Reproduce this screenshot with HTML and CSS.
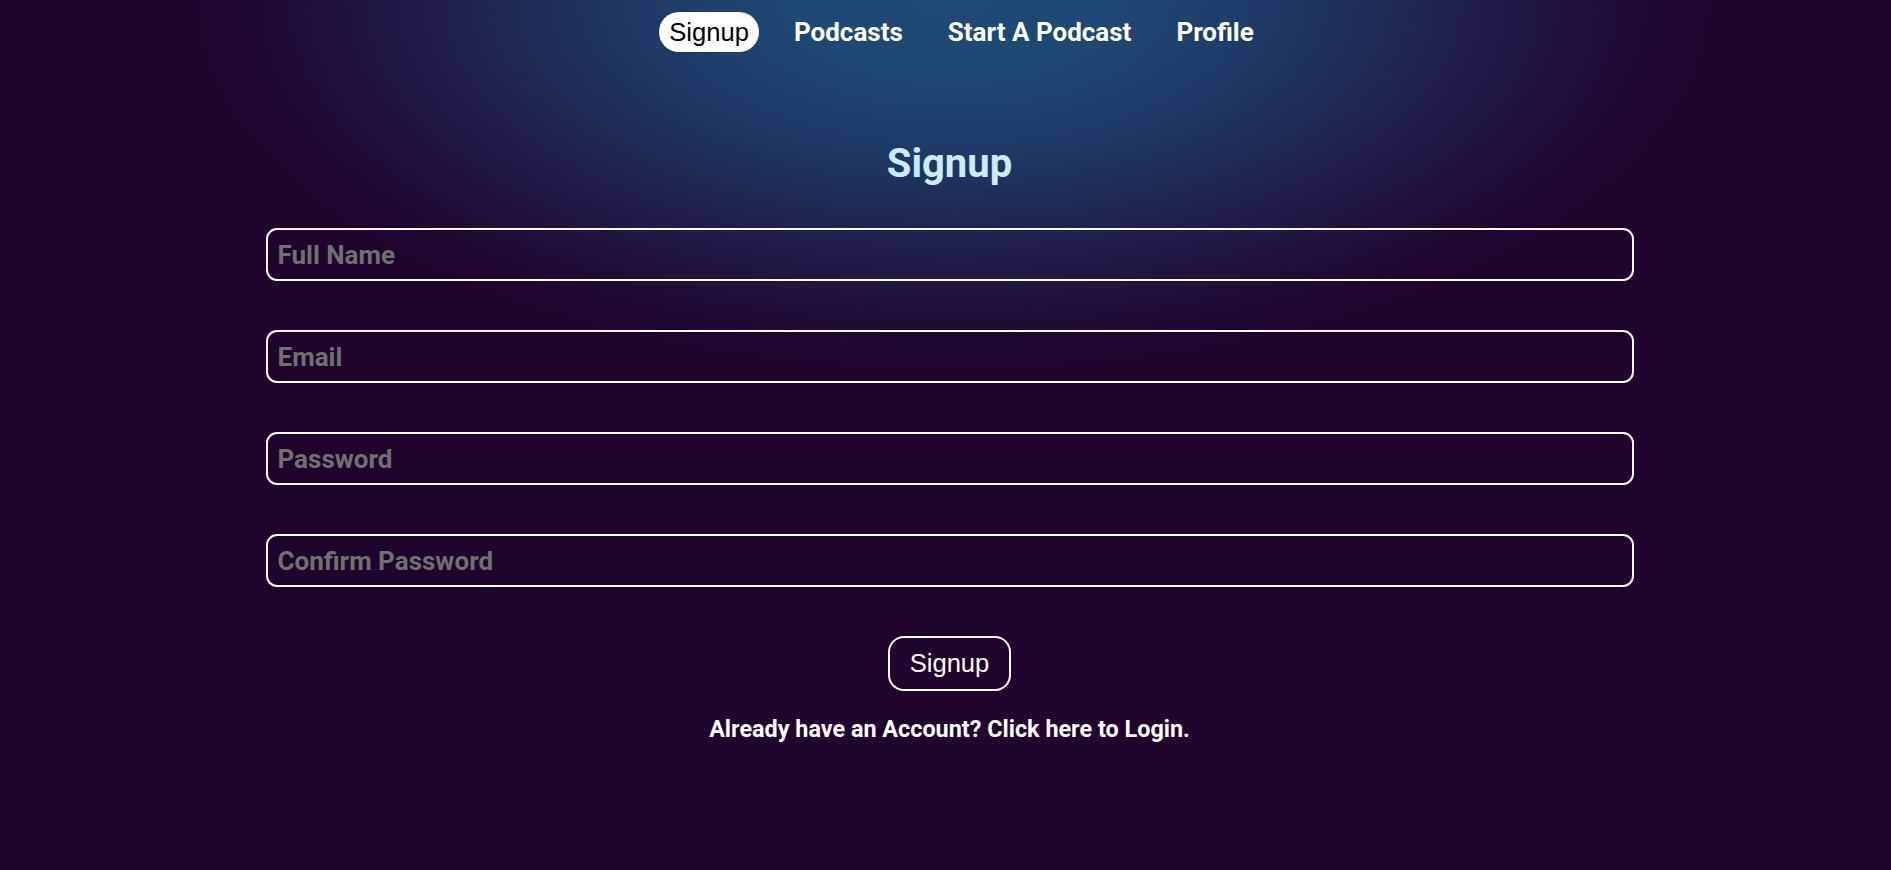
FILE: index.html
```html
<!DOCTYPE html>
<html lang="en">
<head>
<meta charset="utf-8">
<title>Signup</title>
<link rel="stylesheet" href="styles.css">
</head>
<body>
<div class="app">
  <nav class="nav">
    <a class="nav-link active" href="#">Signup</a>
    <a class="nav-link" href="#">Podcasts</a>
    <a class="nav-link" href="#">Start A Podcast</a>
    <a class="nav-link" href="#">Profile</a>
  </nav>
  <main class="page">
    <h1 class="title">Signup</h1>
    <form class="form">
      <input class="field" type="text" placeholder="Full Name">
      <input class="field" type="email" placeholder="Email">
      <input class="field" type="password" placeholder="Password">
      <input class="field" type="password" placeholder="Confirm Password">
      <button class="submit" type="button">Signup</button>
      <p class="switch">Already have an Account? Click here to Login.</p>
    </form>
  </main>
</div>
</body>
</html>
```

FILE: styles.css
```css
html, body {
  margin: 0;
  padding: 0;
  height: 100%;
}

body {
  background-color: #1f042e;
  background-image: radial-gradient(ellipse 760px 370px at 953px 0px, #1e4a76 0%, #1e4873 20%, #1e3b67 40%, #1f2954 58%, #201846 74%, #200b37 88%, #1f042e 100%);
  background-repeat: no-repeat;
  font-family: Roboto, "Liberation Sans", Arial, sans-serif;
  color: #ffffff;
  min-height: 870px;
}

.app {
  display: flex;
  flex-direction: column;
}

.nav {
  display: flex;
  justify-content: center;
  align-items: center;
  gap: 25px;
  padding: 12px 0 0 32px;
}

.nav-link {
  font-family: Roboto, "Liberation Sans", Arial, sans-serif;
  font-weight: 700;
  font-size: 26px;
  color: #ffffff;
  text-decoration: none;
  padding: 5px 10px;
  line-height: 30px;
  border-radius: 20px;
}

.nav-link.active {
  background: #ffffff;
  color: #000000;
  font-family: "Liberation Sans", Arial, sans-serif;
  font-weight: 400;
  font-size: 25.6px;
}

.page {
  display: flex;
  flex-direction: column;
  align-items: center;
  padding-left: 8px;
}

.title {
  margin: 89px 0 0;
  font-size: 40px;
  font-weight: 700;
  line-height: 46px;
  color: #c9ecfb;
}

.form {
  display: flex;
  flex-direction: column;
  align-items: center;
  margin-top: 41px;
  width: 1368px;
}

.field {
  box-sizing: border-box;
  width: 100%;
  height: 53px;
  margin: 0 0 49px;
  padding: 0 10px;
  border: 2px solid #ffffff;
  border-radius: 11px;
  background: transparent;
  font-family: Roboto, "Liberation Sans", Arial, sans-serif;
  font-weight: 700;
  font-size: 26px;
  color: #ffffff;
  outline: none;
}

.field::placeholder {
  color: #707070;
  opacity: 1;
}

.submit {
  box-sizing: border-box;
  height: 55px;
  padding: 0 20px;
  border: 2px solid #ffffff;
  border-radius: 16px;
  background: transparent;
  color: #ffffff;
  font-family: "Liberation Sans", Arial, sans-serif;
  font-size: 25.6px;
}

.switch {
  margin: 24px 0 0;
  font-size: 23.4px;
  font-weight: 700;
  line-height: 28px;
  color: #ffffff;
}
```
